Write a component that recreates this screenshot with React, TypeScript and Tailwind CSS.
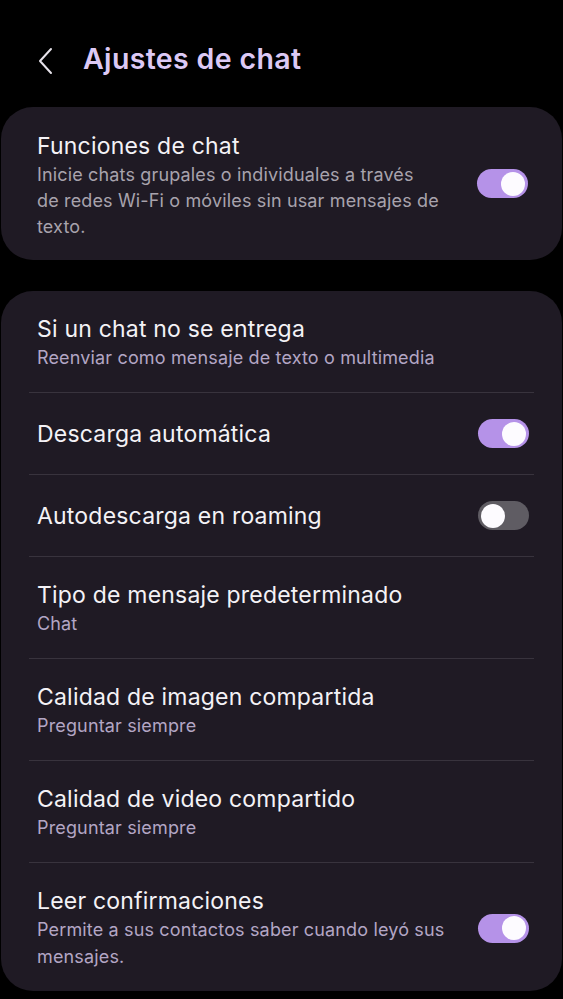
import { useState } from "react";

function Toggle({ on }: { on: boolean }) {
  return (
    <div
      className={`w-[51px] h-[29px] rounded-full flex items-center px-[3px] shrink-0 ${
        on ? "bg-[#b592e8] justify-end" : "bg-[#5f5c63] justify-start"
      }`}
    >
      <div className="w-[24px] h-[24px] rounded-full bg-[#fdfbff]" />
    </div>
  );
}

type Row = {
  title: string;
  sub?: string;
  toggle?: boolean;
};

const rows: Row[] = [
  { title: "Si un chat no se entrega", sub: "Reenviar como mensaje de texto o multimedia" },
  { title: "Descarga automática", toggle: true },
  { title: "Autodescarga en roaming", toggle: false },
  { title: "Tipo de mensaje predeterminado", sub: "Chat" },
  { title: "Calidad de imagen compartida", sub: "Preguntar siempre" },
  { title: "Calidad de video compartido", sub: "Preguntar siempre" },
  {
    title: "Leer confirmaciones",
    sub: "Permite a sus contactos saber cuando leyó sus mensajes.",
    toggle: true,
  },
];

function SettingRow({ row, last }: { row: Row; last: boolean }) {
  const tall = !!row.sub;
  return (
    <div className="px-[28px]">
      <div
        className={`flex items-center gap-4 px-[8px] ${tall ? "pt-[23px] pb-[21px]" : "h-[82px]"} ${
          last ? "" : "border-b border-[#38333d]"
        }`}
      >
        <div className="flex-1 min-w-0">
          <div className="text-[23px] leading-[30px] text-[#f4f2f6] tracking-[0.2px]">{row.title}</div>
          {row.sub && (
            <div className="text-[18px] leading-[27px] text-[#b3a6c4] tracking-[0.15px]">{row.sub}</div>
          )}
        </div>
        {row.toggle !== undefined && (
          <div className="mr-[-3px]">
            <Toggle on={row.toggle} />
          </div>
        )}
      </div>
    </div>
  );
}

export default function App() {
  const [items] = useState(rows);
  return (
    <div className="w-[563px] h-[999px] bg-black overflow-hidden" style={{ fontFamily: "Inter, 'Noto Sans', sans-serif" }}>
      {/* header */}
      <div className="h-[107px] flex items-center pl-[38px] pt-[14px]">
        <svg width="16" height="28" viewBox="0 0 16 28" fill="none">
          <path d="M13 2 L2 14 L13 26" stroke="#e6e2ea" strokeWidth="2" strokeLinecap="round" strokeLinejoin="round" />
        </svg>
        <h1 className="ml-[29px] text-[28.5px] font-semibold text-[#dcc9f5] mt-[-2px] tracking-[0.35px]">Ajustes de chat</h1>
      </div>

      <div className="mx-[1px] bg-[#1f1a24] rounded-[32px] h-[153px] flex items-center pl-[36px] pr-[34px]">
        <div className="flex-1 pt-[2px]">
          <div className="text-[23px] leading-[32px] text-[#f4f2f6] tracking-[0.2px]">Funciones de chat</div>
          <div className="text-[18px] leading-[26px] text-[#a8a3ad] tracking-[0.15px]">
            Inicie chats grupales o individuales a través
            <br />
            de redes Wi-Fi o móviles sin usar mensajes de
            <br />
            texto.
          </div>
        </div>
        <Toggle on />
      </div>

      <div className="mt-[31px] mx-[1px] bg-[#1f1a24] rounded-[32px]">
        {items.map((r, i) => (
          <SettingRow key={r.title} row={r} last={i === items.length - 1} />
        ))}
      </div>
    </div>
  );
}
